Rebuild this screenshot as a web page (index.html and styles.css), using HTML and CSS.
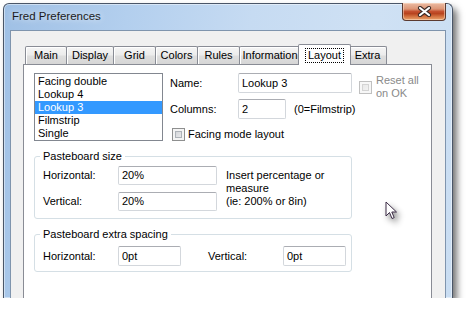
FILE: index.html
```html
<!DOCTYPE html>
<html lang="en">
<head>
    <meta charset="UTF-8">
    <title>Fred Preferences</title>
    <link rel="stylesheet" href="styles.css">
</head>
<body>
    <div class="window">
        <div class="titlebar">
            <span class="title">Fred Preferences</span>
            <div class="close">
                <svg width="15" height="11" viewBox="0 0 15 11">
                    <path d="M3 2 L12 9 M12 2 L3 9" stroke="#3b2a25" stroke-width="4.2" stroke-linecap="round" />
                    <path d="M3 2 L12 9 M12 2 L3 9" stroke="#ffffff" stroke-width="2.2" stroke-linecap="round" />
                </svg>
            </div>
        </div>

        <div class="client">
            <div class="tabs">
                <div class="tab w-main">Main</div>
                <div class="tab w-display">Display</div>
                <div class="tab w-grid">Grid</div>
                <div class="tab w-colors">Colors</div>
                <div class="tab w-rules">Rules</div>
                <div class="tab w-info">Information</div>
                <div class="tab active"><span class="focus">Layout</span></div>
                <div class="tab w-extra">Extra</div>
            </div>

            <div class="panel">
                <div class="top">
                    <div class="listbox">
                        <div class="item">Facing double</div>
                        <div class="item">Lookup 4</div>
                        <div class="item selected">Lookup 3</div>
                        <div class="item">Filmstrip</div>
                        <div class="item">Single</div>
                    </div>

                    <div class="fields">
                        <span class="label name-label">Name:</span>
                        <div class="input name-input">Lookup 3</div>
                        <div class="reset">
                            <span class="checkbox disabled"></span>
                            <span class="reset-text">Reset all<br>on OK</span>
                        </div>

                        <span class="label col-label">Columns:</span>
                        <div class="columns">
                            <div class="input col-input">2</div>
                            <span class="hint">(0=Filmstrip)</span>
                        </div>

                        <div class="facing">
                            <span class="checkbox"></span>
                            <span>Facing mode layout</span>
                        </div>
                    </div>
                </div>

                <fieldset class="group">
                    <legend>Pasteboard size</legend>
                    <div class="size-grid">
                        <span class="label">Horizontal:</span>
                        <div class="input size-input">20%</div>
                        <span class="help">Insert percentage or<br>measure<br>(ie: 200% or 8in)</span>
                        <span class="label">Vertical:</span>
                        <div class="input size-input">20%</div>
                    </div>
                </fieldset>

                <fieldset class="group extra">
                    <legend>Pasteboard extra spacing</legend>
                    <div class="spacing-row">
                        <span class="label wide">Horizontal:</span>
                        <div class="input small-input">0pt</div>
                        <span class="label wide gap">Vertical:</span>
                        <div class="input small-input">0pt</div>
                    </div>
                </fieldset>
            </div>
        </div>
    </div>

    <!-- mouse pointer -->
    <svg class="cursor" width="16" height="22" viewBox="0 0 16 22">
        <path d="M1 1 L1 15 L4.5 11.5 L7 17.5 L9.2 16.6 L6.8 11 L11.5 11 Z" fill="#ffffff" stroke="#3a2a44" stroke-width="1" stroke-linejoin="miter" />
    </svg>
</body>
</html>
```

FILE: styles.css
```css
* {
    margin: 0;
    padding: 0;
    box-sizing: border-box;
}

body {
    background-color: #ffffff;
    font-family: "Liberation Sans", Arial, sans-serif;
    font-size: 11px;
    color: #000000;
}

.window {
    width: 450px;
    height: 295px;
    margin: 3px 0 0 3px;
    padding: 0 6px;
    display: flex;
    flex-direction: column;
    border: 1px solid #4a5668;
    border-bottom: none;
    border-radius: 6px 6px 0 0;
    background: linear-gradient(100deg, #9fc0e5 0%, #b3cfee 25%, #c6dbf2 50%, #cfe1f4 75%, #c9ddf2 100%);
    box-shadow: inset 0 0 0 1px rgba(255, 255, 255, 0.45), 4px 5px 7px rgba(0, 0, 0, 0.55);
}

.titlebar {
    height: 26px;
    display: flex;
    align-items: flex-start;
}

.title {
    padding: 6px 0 0 2px;
    line-height: 13px;
    font-size: 11.5px;
    color: #1b1b1b;
    text-shadow: 0 0 6px rgba(255, 255, 255, 0.9);
}

.close {
    width: 44px;
    height: 18px;
    margin: -1px 0 0 auto;
    display: flex;
    align-items: center;
    justify-content: center;
    border: 1px solid #5b3a30;
    border-top: none;
    border-radius: 0 0 4px 4px;
    background: linear-gradient(#ebbba3 0%, #dd9676 35%, #c4502f 50%, #b8441f 62%, #d67845 82%, #e9a36d 100%);
    box-shadow: inset 0 0 0 1px rgba(255, 230, 210, 0.5);
}

.client {
    flex: 1;
    display: flex;
    flex-direction: column;
    padding: 13px 13px 0 12px;
    border: 1px solid #7f94ad;
    border-bottom: none;
    background-color: #f0f0f0;
}

.tabs {
    height: 20px;
    padding-left: 2px;
    display: flex;
    align-items: flex-end;
}

.tab {
    height: 18px;
    margin-right: -1px;
    line-height: 16px;
    text-align: center;
    border: 1px solid #898c95;
    border-bottom: none;
    border-radius: 2px 2px 0 0;
    background: linear-gradient(#f5f5f5 0%, #ececec 45%, #dedede 55%, #d6d6d6 100%);
    box-shadow: inset 1px 1px 0 #ffffff;
}

.w-main { width: 42px; }
.w-display { width: 48px; }
.w-grid { width: 43px; }
.w-colors { width: 43px; }
.w-rules { width: 43px; }
.w-info { width: 62px; }
.w-extra { width: 39px; }

.tab.active {
    position: relative;
    z-index: 1;
    width: 53px;
    height: 21px;
    margin: 0 -3px -1px -2px;
    padding-top: 3px;
    line-height: 13px;
    background: #ffffff;
    box-shadow: none;
}

.focus {
    display: inline-block;
    padding: 0 2px;
    border: 1px dotted #000000;
}

.panel {
    flex: 1;
    width: 409px;
    padding: 8px 0 0 10px;
    border: 1px solid #898c95;
    border-bottom: none;
    background-color: #ffffff;
}

.top {
    display: flex;
    align-items: flex-start;
}

.listbox {
    width: 129px;
    height: 68px;
    padding-top: 1px;
    border: 1px solid #828790;
    background: #ffffff;
}

.item {
    height: 13px;
    line-height: 13px;
    padding-left: 3px;
}

.item.selected {
    background-color: #3399ff;
    color: #ffffff;
}

.fields {
    margin-left: 7px;
    display: grid;
    grid-template-columns: 68px 114px auto;
    grid-template-rows: 20px 20px auto;
    row-gap: 6px;
    align-items: center;
}

.label {
    line-height: 13px;
}

.name-label {
    grid-column: 1;
    grid-row: 1;
}

.col-label {
    grid-column: 1;
    grid-row: 2;
}

.input {
    height: 20px;
    padding-left: 3px;
    line-height: 18px;
    border: 1px solid #d3d7dc;
    border-top-color: #abadb3;
    border-radius: 2px;
    background: #ffffff;
}

.name-input {
    grid-column: 2;
    grid-row: 1;
    width: 114px;
}

.reset {
    grid-column: 3;
    grid-row: 1 / 3;
    align-self: start;
    margin: 1px 0 0 7px;
    display: flex;
    align-items: center;
    gap: 4px;
    color: #8a8a8a;
}

.reset-text {
    line-height: 13px;
    white-space: nowrap;
}

.checkbox {
    width: 13px;
    height: 13px;
    flex-shrink: 0;
    border: 1px solid #8e8f8f;
    background: linear-gradient(135deg, #c9ccd1, #f3f3f3);
    box-shadow: inset 0 0 0 2px #f4f4f4, inset 0 0 0 3px #aeb3b9;
}

.checkbox.disabled {
    border-color: #c0c0c0;
    background: linear-gradient(135deg, #e4e4e4, #f7f7f7);
    box-shadow: inset 0 0 0 2px #f7f7f7, inset 0 0 0 3px #d4d4d4;
}

.columns {
    grid-column: 2;
    grid-row: 2;
    display: flex;
    align-items: center;
    gap: 8px;
    white-space: nowrap;
}

.col-input {
    width: 48px;
    flex-shrink: 0;
}

.facing {
    grid-column: 1 / 4;
    grid-row: 3;
    margin: 3px 0 0 2px;
    display: flex;
    align-items: center;
    gap: 3px;
    line-height: 13px;
}

.group {
    width: 318px;
    margin-top: 9px;
    padding: 3px 0 7px 5px;
    border: 1px solid #d5dfe5;
    border-radius: 3px;
}

.group legend {
    padding: 0 3px;
    line-height: 13px;
}

.group.extra {
    padding-top: 5px;
    padding-bottom: 5px;
}

.size-grid {
    padding-left: 3px;
    display: grid;
    grid-template-columns: 75px 99px auto;
    grid-template-rows: 19px 19px;
    row-gap: 7px;
    align-items: center;
}

.size-input {
    width: 99px;
    height: 19px;
    line-height: 17px;
}

.help {
    grid-column: 3;
    grid-row: 1 / 3;
    margin-left: 9px;
    line-height: 13px;
}

.spacing-row {
    padding-left: 3px;
    display: flex;
    align-items: center;
}

.label.wide {
    width: 75px;
}

.label.gap {
    margin-left: 27px;
}

.small-input {
    width: 63px;
}

.cursor {
    position: absolute;
    left: 385px;
    top: 201px;
    filter: drop-shadow(3px 4px 3px rgba(0, 0, 0, 0.45));
}
```
